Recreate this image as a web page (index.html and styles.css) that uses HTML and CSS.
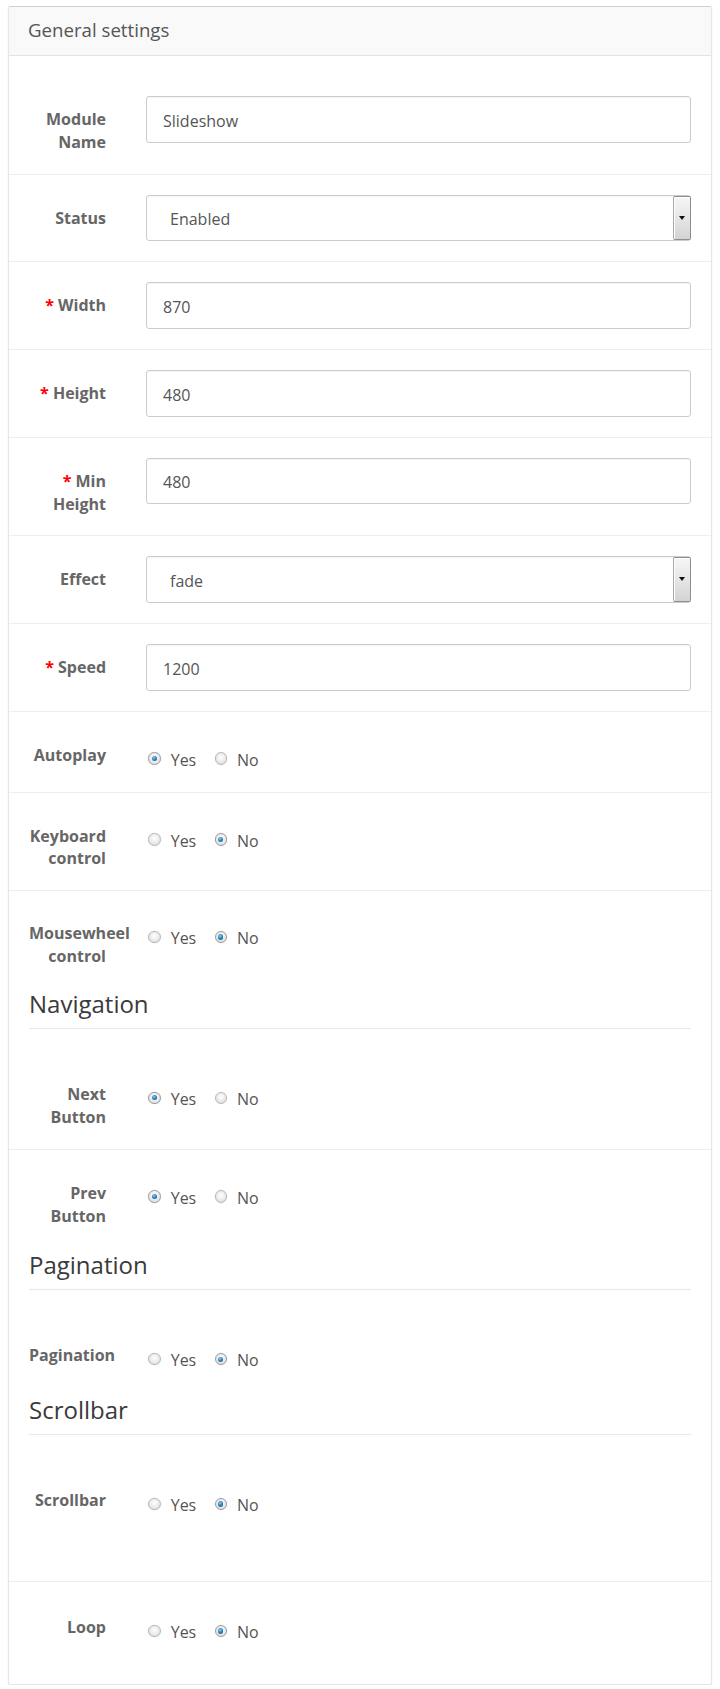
FILE: index.html
```html
<!DOCTYPE html>
<html>
<head>
<meta charset="utf-8">
<title>General settings</title>
<link rel="stylesheet" href="styles.css">
</head>
<body>
<div class="panel">
  <div class="panel-heading"><h3 class="panel-title">General settings</h3></div>
  <div class="panel-body">
    <div class="form-group">
      <label class="control-label">Module Name</label>
      <div class="control"><div class="form-control">Slideshow</div></div>
    </div>
    <div class="form-group">
      <label class="control-label">Status</label>
      <div class="control"><div class="form-control select"><span>Enabled</span><span class="select-btn"><span class="caret"></span></span></div></div>
    </div>
    <div class="form-group required">
      <label class="control-label">Width</label>
      <div class="control"><div class="form-control">870</div></div>
    </div>
    <div class="form-group required">
      <label class="control-label">Height</label>
      <div class="control"><div class="form-control">480</div></div>
    </div>
    <div class="form-group required">
      <label class="control-label">Min Height</label>
      <div class="control"><div class="form-control">480</div></div>
    </div>
    <div class="form-group">
      <label class="control-label">Effect</label>
      <div class="control"><div class="form-control select"><span>fade</span><span class="select-btn"><span class="caret"></span></span></div></div>
    </div>
    <div class="form-group required">
      <label class="control-label">Speed</label>
      <div class="control"><div class="form-control">1200</div></div>
    </div>
    <div class="form-group">
      <label class="control-label">Autoplay</label>
      <div class="control radios">
        <label class="radio-inline"><span class="radio checked"></span>Yes</label>
        <label class="radio-inline"><span class="radio"></span>No</label>
      </div>
    </div>
    <div class="form-group">
      <label class="control-label">Keyboard control</label>
      <div class="control radios">
        <label class="radio-inline"><span class="radio"></span>Yes</label>
        <label class="radio-inline"><span class="radio checked"></span>No</label>
      </div>
    </div>
    <div class="form-group tight">
      <label class="control-label">Mousewheel control</label>
      <div class="control radios">
        <label class="radio-inline"><span class="radio"></span>Yes</label>
        <label class="radio-inline"><span class="radio checked"></span>No</label>
      </div>
    </div>

    <div class="section">
      <h3 class="section-title">Navigation</h3>
      <div class="form-group">
        <label class="control-label">Next Button</label>
        <div class="control radios">
          <label class="radio-inline"><span class="radio checked"></span>Yes</label>
          <label class="radio-inline"><span class="radio"></span>No</label>
        </div>
      </div>
      <div class="form-group">
        <label class="control-label">Prev Button</label>
        <div class="control radios">
          <label class="radio-inline"><span class="radio checked"></span>Yes</label>
          <label class="radio-inline"><span class="radio"></span>No</label>
        </div>
      </div>
    </div>

    <div class="section">
      <h3 class="section-title">Pagination</h3>
      <div class="form-group">
        <label class="control-label">Pagination</label>
        <div class="control radios">
          <label class="radio-inline"><span class="radio"></span>Yes</label>
          <label class="radio-inline"><span class="radio checked"></span>No</label>
        </div>
      </div>
    </div>

    <div class="section">
      <h3 class="section-title">Scrollbar</h3>
      <div class="form-group tall">
        <label class="control-label">Scrollbar</label>
        <div class="control radios">
          <label class="radio-inline"><span class="radio"></span>Yes</label>
          <label class="radio-inline"><span class="radio checked"></span>No</label>
        </div>
      </div>
      <div class="form-group loose">
        <label class="control-label">Loop</label>
        <div class="control radios">
          <label class="radio-inline"><span class="radio"></span>Yes</label>
          <label class="radio-inline"><span class="radio checked"></span>No</label>
        </div>
      </div>
    </div>
  </div>
</div>
</body>
</html>
```

FILE: styles.css
```css
html, body {
  background: #ffffff;
}
body {
  margin: 0;
  padding: 6px 8px 0;
  font-family: "Open Sans", "DejaVu Sans", sans-serif;
  font-size: 16px;
  line-height: 22.857px;
  color: #666666;
}

.panel {
  background: #ffffff;
  border: 1px solid #e6e6e6;
  border-top-color: #d0d0d0;
  border-radius: 3px;
  box-shadow: 0 1px 2px rgba(0, 0, 0, 0.08);
}

.panel-heading {
  box-sizing: border-box;
  height: 49px;
  padding: 0 19px;
  background: #f9f9f9;
  border-bottom: 1px solid #e3e3e3;
  border-radius: 3px 3px 0 0;
}

.panel-title {
  margin: 0;
  font-size: 18.67px;
  font-weight: 400;
  line-height: 45px;
  color: #555555;
}

.panel-body {
  padding: 20px;
}

.form-group {
  display: flex;
  margin: 0 -20px;
  padding: 20px 0;
}

.form-group + .form-group {
  border-top: 1px solid #eeeeee;
}

.form-group.tight {
  padding-top: 19px;
  padding-bottom: 18px;
}

.form-group.tall {
  padding-bottom: 64px;
}

.form-group.loose {
  padding-top: 22px;
}

.control-label {
  box-sizing: border-box;
  flex: none;
  width: 117px;
  padding: 12px 20px 0;
  text-align: right;
  font-weight: 700;
  color: #666666;
}

.required .control-label::before {
  content: "* ";
  color: #ff0000;
  font-weight: 700;
}

.control {
  flex: 1;
  min-width: 0;
  padding: 0 20px;
}

.form-control {
  position: relative;
  box-sizing: border-box;
  height: 46.67px;
  padding: 1.5px 16px 0;
  border: 1px solid #cccccc;
  border-radius: 3px;
  background: #ffffff;
  color: #555555;
  line-height: 44.67px;
  box-shadow: inset 0 1px 1px rgba(0, 0, 0, 0.04);
}

.form-control.select {
  padding-left: 23px;
}

.select-btn {
  position: absolute;
  top: 0;
  right: -1px;
  bottom: 0;
  width: 16px;
  border: 1px solid #8e8e8e;
  border-left-color: #a8a8a8;
  border-radius: 2px;
  background: linear-gradient(#f6f6f6, #e4e4e4 55%, #d3d3d3);
  box-shadow: inset 1px 1px 0 #ffffff;
}

.caret {
  position: absolute;
  left: 5px;
  top: 19px;
  width: 0;
  height: 0;
  border-top: 4px solid #111111;
  border-left: 3px solid transparent;
  border-right: 3px solid transparent;
}

.radios {
  display: flex;
  gap: 16px;
  align-items: flex-start;
}

.radio-inline {
  position: relative;
  padding: 17px 0 0 24.7px;
  color: #555555;
  font-weight: 400;
}

.radio {
  position: absolute;
  left: 2.3px;
  top: 20.5px;
  box-sizing: border-box;
  width: 12.5px;
  height: 12.5px;
  border-radius: 50%;
  border: 1px solid #b9b9b9;
  background: radial-gradient(circle at 50% 40%, #ffffff 0, #eeeeee 45%, #d4d4d4 100%);
  box-shadow: 0 0 0 0.5px rgba(0, 0, 0, 0.05);
}

.radio.checked {
  border-color: #9c9c9c;
}

.radio.checked::after {
  content: "";
  position: absolute;
  left: 2.6px;
  top: 2.6px;
  width: 5.3px;
  height: 5.3px;
  border-radius: 50%;
  background: radial-gradient(circle at 40% 35%, #8fd0f5 0, #2f86c0 45%, #0e4f82 100%);
}

.section-title {
  margin: 0 0 22px;
  padding: 0 0 6px;
  font-size: 24px;
  font-weight: 400;
  line-height: 36px;
  color: #3a3a3a;
  border-bottom: 1px solid #e8e8e8;
}
```
